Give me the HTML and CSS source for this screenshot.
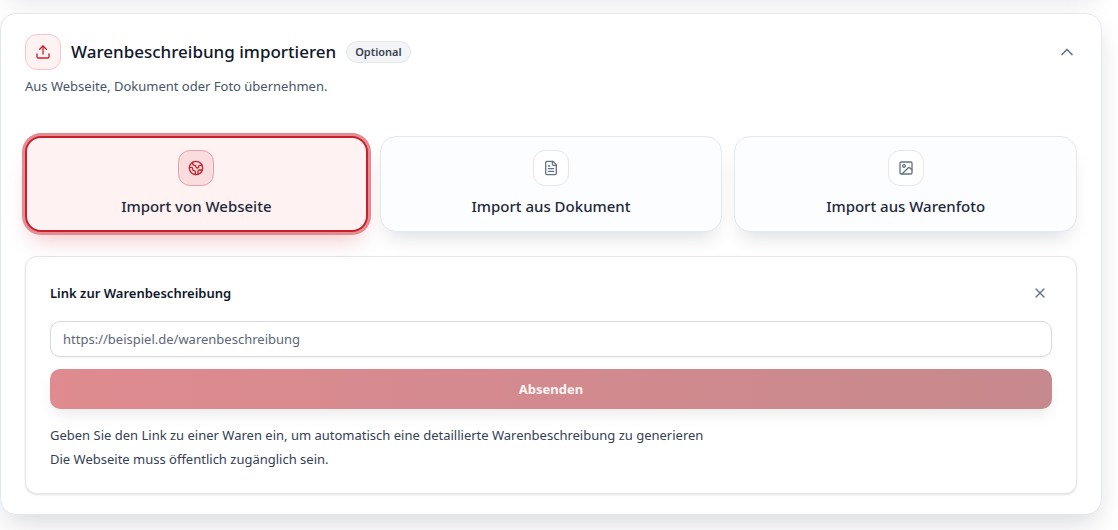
FILE: index.html
```html
<!DOCTYPE html>
<html lang="de">
<head>
  <meta charset="UTF-8">
  <meta name="viewport" content="width=device-width, initial-scale=1.0">
  <title>Warenbeschreibung importieren</title>
  <link rel="stylesheet" href="styles.css">
</head>
<body>

  <main class="page">
    <div class="card card-previous"></div>

    <section class="card">
      <!-- Kopfbereich -->
      <header class="card-header">
        <span class="icon-box icon-box-soft">
          <svg class="icon" viewBox="0 0 24 24"><path d="M21 15v4a2 2 0 0 1-2 2H5a2 2 0 0 1-2-2v-4"/><path d="m17 8-5-5-5 5"/><path d="M12 3v12"/></svg>
        </span>
        <h2 class="card-title">Warenbeschreibung importieren</h2>
        <span class="badge">Optional</span>
        <button class="icon-button toggle" type="button" aria-label="Einklappen">
          <svg class="icon icon-large" viewBox="0 0 24 24"><path d="m18 15-6-6-6 6"/></svg>
        </button>
      </header>
      <p class="card-subtitle">Aus Webseite, Dokument oder Foto übernehmen.</p>

      <!-- Auswahl der Quelle -->
      <div class="options">
        <button class="option option-active" type="button">
          <span class="icon-box">
            <svg class="icon" viewBox="0 0 24 24"><path d="M21.54 15H17a2 2 0 0 0-2 2v4.54"/><path d="M7 3.34V5a3 3 0 0 0 3 3 2 2 0 0 1 2 2c0 1.1.9 2 2 2a2 2 0 0 0 2-2c0-1.1.9-2 2-2h3.17"/><path d="M11 21.95V18a2 2 0 0 0-2-2 2 2 0 0 1-2-2v-1a2 2 0 0 0-2-2H2.05"/><circle cx="12" cy="12" r="10"/></svg>
          </span>
          Import von Webseite
        </button>
        <button class="option" type="button">
          <span class="icon-box">
            <svg class="icon" viewBox="0 0 24 24"><path d="M15 2H6a2 2 0 0 0-2 2v16a2 2 0 0 0 2 2h12a2 2 0 0 0 2-2V7Z"/><path d="M14 2v4a2 2 0 0 0 2 2h4"/><path d="M10 9H8"/><path d="M16 13H8"/><path d="M16 17H8"/></svg>
          </span>
          Import aus Dokument
        </button>
        <button class="option" type="button">
          <span class="icon-box">
            <svg class="icon" viewBox="0 0 24 24"><rect x="3" y="3" width="18" height="18" rx="2"/><circle cx="9" cy="9" r="2"/><path d="m21 15-3.086-3.086a2 2 0 0 0-2.828 0L6 21"/></svg>
          </span>
          Import aus Warenfoto
        </button>
      </div>

      <!-- Formular -->
      <form class="panel">
        <div class="panel-header">
          <label class="panel-title" for="link">Link zur Warenbeschreibung</label>
          <button class="icon-button" type="button" aria-label="Schließen">
            <svg class="icon" viewBox="0 0 24 24"><path d="M18 6 6 18"/><path d="m6 6 12 12"/></svg>
          </button>
        </div>
        <input class="link-input" type="url" id="link" placeholder="https://beispiel.de/warenbeschreibung">
        <button class="submit" type="submit" disabled>Absenden</button>
        <p class="hint">Geben Sie den Link zu einer Waren ein, um automatisch eine detaillierte Warenbeschreibung zu generieren<br>Die Webseite muss öffentlich zugänglich sein.</p>
      </form>
    </section>
  </main>

</body>
</html>
```

FILE: styles.css
```css
/* Variables */
:root {
  --red: #c8202c;
  --text: #0f172a;
  --text-soft: #475569;
  --border: #e2e8f0;
}

* {
  box-sizing: border-box;
}

body {
  margin: 0;
  background-color: #fff;
  color: var(--text);
  font-family: "Segoe UI", "Noto Sans", sans-serif;
  font-size: 13px;
}

button,
input {
  font: inherit;
}

.page {
  display: flex;
  flex-direction: column;
  gap: 24px;
  padding-right: 16px;
  overflow: hidden;
  padding-bottom: 15px;
}

/* Card */
.card {
  padding: 20px 24px;
  border: 1px solid var(--border);
  border-radius: 16px;
  background-color: #fff;
  box-shadow: 0 12px 28px -6px rgba(15, 23, 42, 0.18);
}

.card-previous {
  margin-top: -53px;
}

.card-header {
  display: flex;
  align-items: center;
  gap: 10px;
}

.card-title {
  margin: 0;
  font-size: 17px;
  font-weight: 500;
  line-height: 28px;
}

.card-subtitle {
  margin: 4px 0 0;
  color: var(--text-soft);
  line-height: 24px;
}

.badge {
  padding: 0 8px;
  border: 1px solid #e5e7eb;
  border-radius: 11px;
  background-color: #f3f4f6;
  color: #374151;
  font-size: 11px;
  font-weight: 600;
  line-height: 20px;
}

/* Icons */
.icon {
  display: block;
  width: 16px;
  height: 16px;
  fill: none;
  stroke: currentColor;
  stroke-width: 2;
  stroke-linecap: round;
  stroke-linejoin: round;
}

.icon-large {
  width: 20px;
  height: 20px;
}

.icon-box {
  display: flex;
  align-items: center;
  justify-content: center;
  width: 36px;
  height: 36px;
  border: 1px solid var(--border);
  border-radius: 12px;
  background-color: #fff;
  color: #64748b;
}

.icon-box-soft {
  border-color: #f4c7ca;
  background-color: #fef2f2;
  color: var(--red);
}

.icon-button {
  padding: 4px;
  border: none;
  background: none;
  color: #64748b;
  cursor: pointer;
}

.toggle {
  margin-left: auto;
  padding: 0;
}

/* Options */
.options {
  display: grid;
  grid-template-columns: repeat(3, 1fr);
  gap: 12px;
  margin-top: 38px;
}

.option {
  display: flex;
  flex-direction: column;
  align-items: center;
  justify-content: center;
  gap: 8px;
  height: 96px;
  border: 1px solid var(--border);
  border-radius: 16px;
  background-color: #fcfdff;
  color: #1e293b;
  font-size: 15px;
  font-weight: 500;
  line-height: 24px;
  box-shadow: 0 12px 20px -8px rgba(15, 23, 42, 0.16);
  cursor: pointer;
}

.option-active {
  border: 2px solid var(--red);
  background-color: #fef2f2;
  box-shadow: 0 0 0 3px #e38d92, 0 14px 22px -6px rgba(200, 32, 44, 0.25);
}

.option-active .icon-box {
  border-color: #e6a3a8;
  background-color: #f8dcde;
  color: var(--red);
}

/* Panel */
.panel {
  display: flex;
  flex-direction: column;
  gap: 12px;
  margin-top: 24px;
  padding: 24px 24px 22px;
  border: 1px solid #e5e7eb;
  border-radius: 12px;
  background-color: #fff;
  box-shadow: 0 1px 2px rgba(0, 0, 0, 0.12);
}

.panel-header {
  display: flex;
  align-items: center;
  justify-content: space-between;
  height: 24px;
  margin-bottom: 4px;
}

.panel-title {
  font-weight: 600;
}

.link-input {
  width: 100%;
  height: 36px;
  padding: 0 12px;
  border: 1px solid #d5dae2;
  border-radius: 10px;
  background-color: #fff;
  color: var(--text);
  box-shadow: 0 1px 2px rgba(0, 0, 0, 0.05);
}

.link-input::placeholder {
  color: #5b6776;
  opacity: 1;
}

.submit {
  height: 40px;
  border: none;
  border-radius: 10px;
  background: linear-gradient(90deg, #df8b90, #c6898d);
  color: #fdf4f4;
  font-weight: 700;
  box-shadow: 0 8px 16px -4px rgba(15, 23, 42, 0.1);
}

.hint {
  margin: 2px 0 0;
  color: #334155;
  line-height: 24px;
}

/* Responsiveness */
@media (max-width: 640px) {
  .options {
    grid-template-columns: 1fr;
  }
}
```
